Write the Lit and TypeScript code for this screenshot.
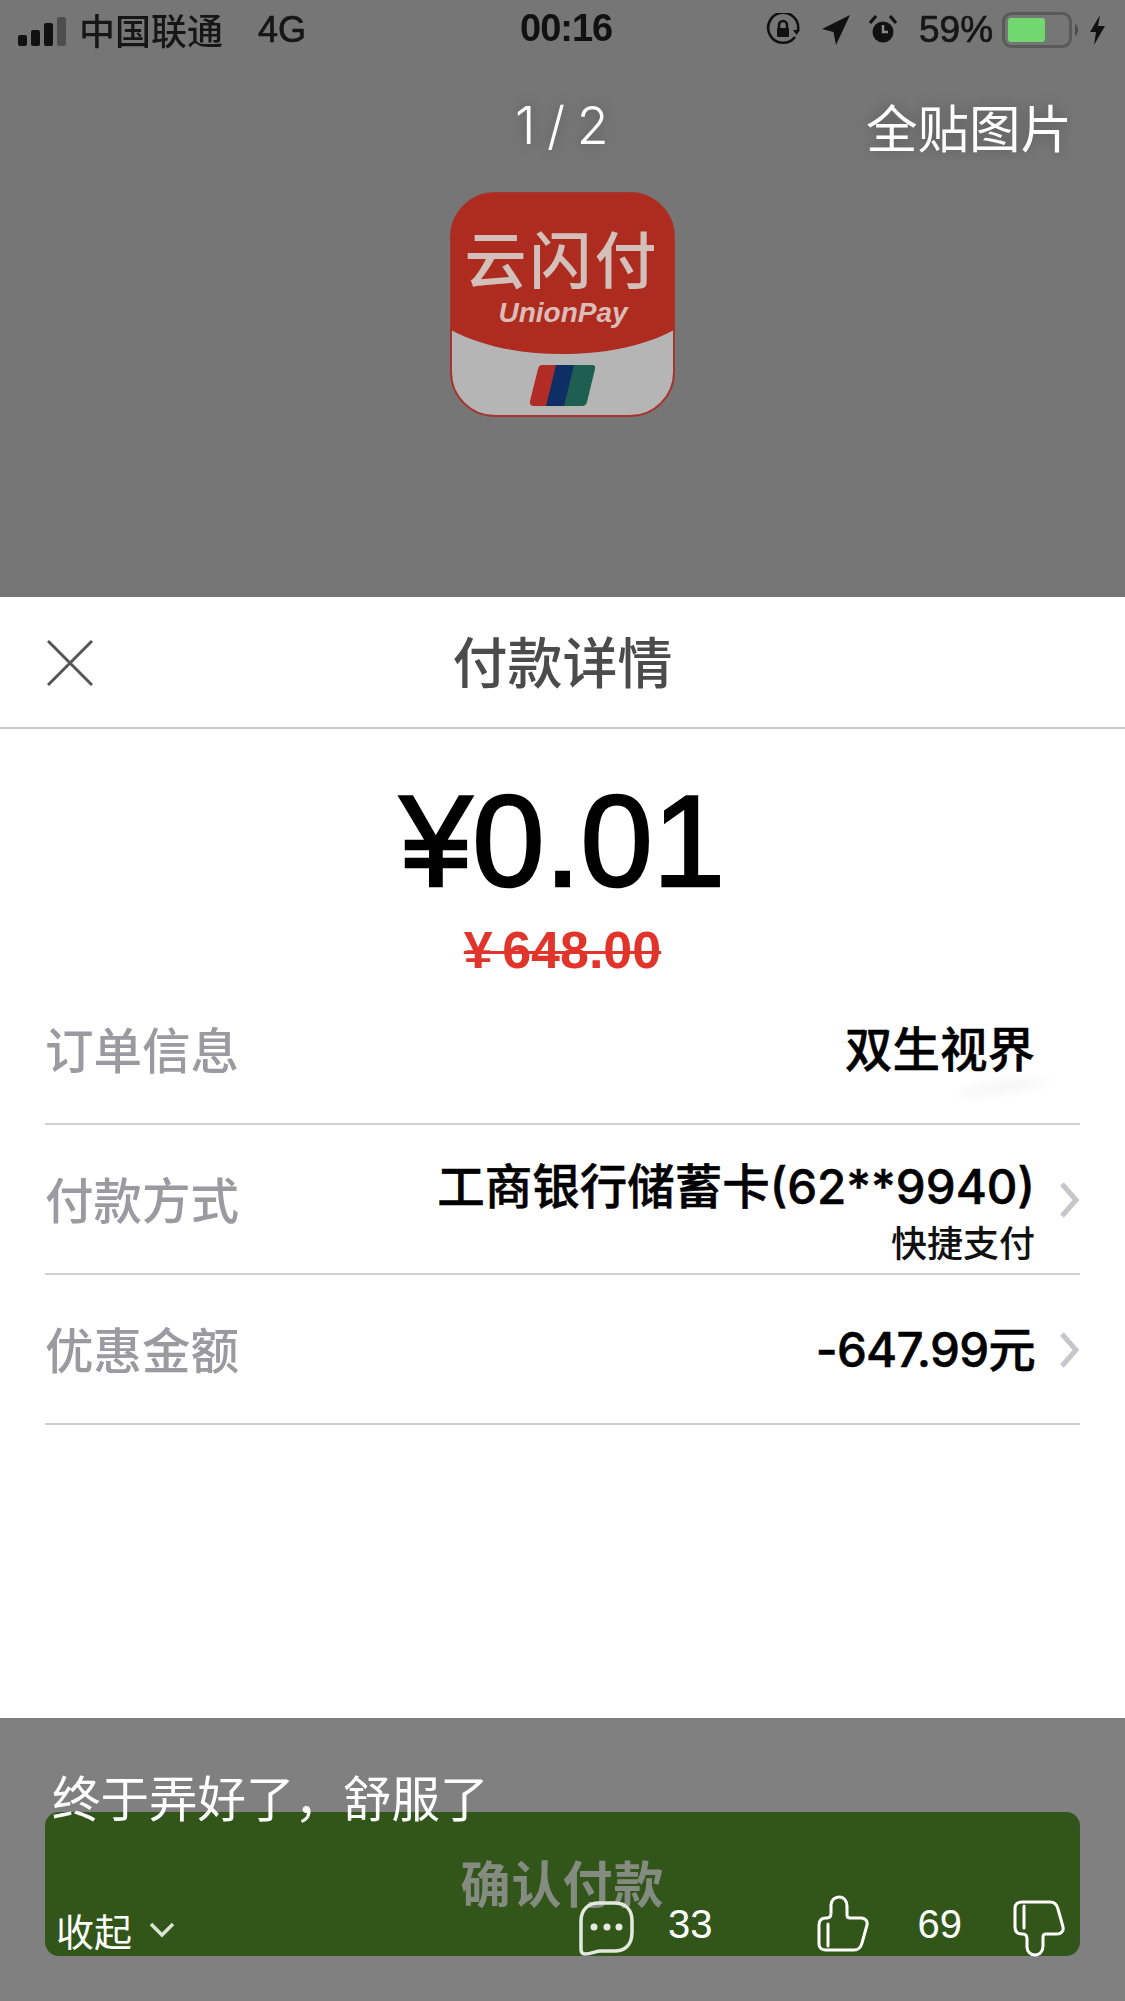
import { LitElement, html, css, svg } from "lit";
import { customElement } from "lit/decorators.js";

const thumb = svg`<path d="M2 30C2 25 5 23 9 23H10C13 23 14 21 14 18V10C14 5 18 2 22 2C27 2 30 6 30 11V20C30 22 31 23 33 23H44C48 23 51 26 50 30L45 48C44 52 41 55 37 55H9C5 55 2 53 2 49Z"/><path d="M11 29V51"/>`;

@customElement("app-root")
export class AppRoot extends LitElement {
  static styles = css`
    :host {
      display: flex;
      flex-direction: column;
      width: 1125px;
      height: 2001px;
      overflow: hidden;
      font-family: "Liberation Sans", "Noto Sans CJK SC", sans-serif;
      background: #fff;
    }
    .top {
      height: 597px;
      background: #767676;
      display: flex;
      flex-direction: column;
      flex: none;
    }
    .status {
      height: 62px;
      display: grid;
      grid-template-columns: 500px 135px 1fr;
      align-items: center;
      color: #111;
      padding-left: 18px;
      filter: blur(0.5px);
    }
    .st-left {
      display: flex;
      align-items: center;
    }
    .signal {
      width: 50px;
      height: 30px;
      margin-right: 11px;
      flex: none;
    }
    .carrier {
      font-size: 36px;
      font-family: "Noto Sans CJK SC", sans-serif;
      font-weight: 500;
      line-height: 44px;
      color: #161616;
      margin-top: -4px;
    }
    .net {
      font-size: 36px;
      margin-left: 35px;
      margin-top: -2px;
      color: #161616;
      -webkit-text-stroke: 0.7px #161616;
    }
    .time {
      font-size: 38px;
      font-weight: 700;
      letter-spacing: -1px;
      margin-left: 2px;
      margin-top: -6px;
      color: #111;
    }
    .st-right {
      display: flex;
      align-items: center;
      margin-left: 113px;
      margin-top: -2px;
    }
    .st-right svg {
      flex: none;
      display: block;
    }
    .pct {
      font-size: 37px;
      color: #161616;
      -webkit-text-stroke: 0.7px #161616;
      margin: 0 9px 0 21px;
    }
    .bolt {
      margin-left: 8px;
    }
    .nav {
      display: flex;
      align-items: center;
      height: 68px;
      margin-top: -2px;
      padding-top: 32px;
      color: #fff;
      text-shadow: 0 0 14px rgba(0, 0, 0, 0.28);
    }
    .pager {
      margin-left: 515px;
      font-family: "Inter", "Liberation Sans", sans-serif;
      font-size: 52px;
      font-weight: 300;
      word-spacing: -3px;
      width: 351px;
      line-height: 68px;
      white-space: nowrap;
    }
    .fulltxt {
      font-family: "Noto Sans CJK SC", sans-serif;
      font-size: 51.5px;
      font-weight: 400;
      line-height: 68px;
      white-space: nowrap;
    }
    .logo {
      display: block;
      margin: 32px 0 0 450px;
      width: 225px;
      height: 225px;
    }
    .logo text {
      font-family: "Noto Sans CJK SC", sans-serif;
    }
    .logo .uni {
      font-family: "Liberation Sans", sans-serif;
      font-style: italic;
      font-weight: 700;
    }

    .sheet {
      height: 1121px;
      flex: none;
      background: #fff;
      display: flex;
      flex-direction: column;
      position: relative;
    }
    .head {
      height: 130px;
      box-sizing: content-box;
      border-bottom: 2px solid #c9c9c9;
      display: flex;
      align-items: center;
      justify-content: center;
      position: relative;
      flex: none;
    }
    .close {
      position: absolute;
      left: 47px;
      top: 43px;
    }
    .title {
      font-family: "Noto Sans CJK SC", sans-serif;
      font-size: 55px;
      color: #4b4b4b;
      font-weight: 500;
      line-height: 70px;
      margin-top: -7px;
    }
    .amounts {
      height: 246px;
      flex: none;
      display: flex;
      flex-direction: column;
      align-items: center;
      padding-top: 37px;
      box-sizing: border-box;
    }
    .amount {
      font-size: 130px;
      line-height: 150px;
      color: #000;
      -webkit-text-stroke: 2.5px #000;
    }
    .old {
      font-size: 52px;
      line-height: 50px;
      margin-top: 9px;
      color: #e1352b;
      font-weight: 700;
      text-decoration: line-through;
      text-decoration-thickness: 3px;
      word-spacing: -5px;
      font-family: "Liberation Sans", sans-serif;
    }
    .rows {
      margin: 0 45px;
      display: flex;
      flex-direction: column;
    }
    .row {
      height: 150px;
      box-sizing: border-box;
      border-bottom: 2px solid #d0d0d2;
      display: flex;
      align-items: center;
      justify-content: space-between;
    }
    .label {
      font-family: "Noto Sans CJK SC", sans-serif;
      font-size: 48.5px;
      color: #9a9aa0;
      font-weight: 500;
      line-height: 60px;
      margin-top: -2px;
    }
    .right {
      display: flex;
      align-items: center;
    }
    .val {
      display: flex;
      flex-direction: column;
      align-items: flex-end;
      color: #000;
      font-weight: 500;
      margin-top: 2px;
    }
    .v1 {
      font-family: "Inter", "Noto Sans CJK SC", sans-serif;
      font-size: 47.5px;
      line-height: 56px;
      white-space: nowrap;
      -webkit-text-stroke: 0.5px #000;
    }
    .tight {
      letter-spacing: -0.8px;
    }
    .v2 {
      font-family: "Noto Sans CJK SC", sans-serif;
      font-size: 36px;
      line-height: 44px;
      margin-top: 4px;
      color: #111;
    }
    .two .val {
      margin-top: 24px;
    }
    .chev {
      width: 45px;
      display: flex;
      justify-content: flex-end;
      margin-top: 2px;
    }
    .chev svg {
      display: block;
    }
    .smudge {
      position: absolute;
      left: 958px;
      top: 484px;
      width: 90px;
      height: 12px;
      border-radius: 50%;
      background: #f6f6f6;
      filter: blur(5px);
      transform: rotate(-8deg);
    }

    .bottom {
      flex: 1;
      background: #808080;
      position: relative;
      padding: 94px 45px 0;
    }
    .btn {
      height: 144px;
      border-radius: 14px;
      background: #32561a;
      display: flex;
      align-items: center;
      justify-content: center;
      color: #848b80;
      font-family: "Noto Sans CJK SC", sans-serif;
      font-weight: 700;
      font-size: 50px;
      letter-spacing: 1px;
      padding-bottom: 6px;
      box-sizing: border-box;
    }
    .caption {
      position: absolute;
      left: 52px;
      top: 48px;
      font-family: "Noto Sans CJK SC", sans-serif;
      font-size: 48.5px;
      line-height: 60px;
      color: #fff;
      font-weight: 400;
      white-space: nowrap;
    }
    .bar {
      position: absolute;
      left: 58px;
      top: 177px;
      width: 1010px;
      height: 62px;
      display: flex;
      align-items: center;
      color: #fff;
    }
    .fold {
      font-family: "Noto Sans CJK SC", sans-serif;
      font-size: 38px;
      font-weight: 400;
      line-height: 50px;
      width: 91px;
      flex: none;
      white-space: nowrap;
      margin-top: 8px;
      margin-left: -2px;
      padding-right: 2px;
    }
    .num {
      font-size: 40px;
      line-height: 46px;
      font-family: "Liberation Sans", sans-serif;
      margin-top: -4px;
      flex: none;
    }
    .bar svg {
      flex: none;
      display: block;
    }
    .ic {
      fill: none;
      stroke: #fff;
      stroke-width: 3;
      stroke-linejoin: round;
      stroke-linecap: round;
    }
    .down-chev {
      margin-top: 8px;
    }
    .comment {
      margin-left: 404px;
      margin-top: 6px;
    }
    .n33 {
      margin-left: 33px;
    }
    .up {
      margin-left: 104px;
      margin-top: -6px;
    }
    .n69 {
      margin-left: 49px;
    }
    .down {
      margin-left: 51px;
      margin-top: 4px;
    }
  `;

  render() {
    const chevron = html`<div class="chev">
      <svg width="21" height="36" viewBox="0 0 21 36" fill="none" stroke="#c6c6cb" stroke-width="5">
        <path d="M3 2L17 18L3 34"></path>
      </svg>
    </div>`;
    return html`
      <section class="top">
        <div class="status">
          <div class="st-left">
            <svg class="signal" viewBox="0 0 50 30">
              <rect x="0" y="19" width="9" height="11" rx="2" fill="#111"></rect>
              <rect x="13" y="14" width="9" height="16" rx="2" fill="#111"></rect>
              <rect x="26" y="7" width="9" height="23" rx="2" fill="#111"></rect>
              <rect x="39" y="1" width="9" height="29" rx="2" fill="#4e4e4e"></rect>
            </svg>
            <span class="carrier">中国联通</span>
            <span class="net">4G</span>
          </div>
          <div class="time">00:16</div>
          <div class="st-right">
            <svg width="34" height="34" viewBox="0 0 34 34" fill="none" stroke="#111" stroke-width="2.6">
              <path d="M29 24A15 15 0 1 1 32 17"></path>
              <path d="M27 17H34L30.5 22Z" fill="#111" stroke="none"></path>
              <rect x="11" y="15" width="12" height="9" rx="1" fill="#111" stroke="none"></rect>
              <path d="M13 15V12A4 4 0 0 1 21 12V15"></path>
            </svg>
            <svg style="margin-left:21px" width="30" height="32" viewBox="0 0 30 32">
              <path d="M29 1L15 31L12.5 18L1 15Z" fill="#111"></path>
            </svg>
            <svg style="margin-left:17px" width="30" height="32" viewBox="0 0 30 32">
              <circle cx="15" cy="18" r="10.5" fill="#111"></circle>
              <path d="M2 9L8 2M28 9L22 2" stroke="#111" stroke-width="3"></path>
              <path d="M15 11V18H20" stroke="#8a8a8a" stroke-width="2.5" fill="none"></path>
            </svg>
            <span class="pct">59%</span>
            <svg width="80" height="36" viewBox="0 0 80 36">
              <rect x="1.5" y="1.5" width="67" height="33" rx="8" fill="none" stroke="#5a5a5a" stroke-width="3"></rect>
              <rect x="6" y="6" width="37" height="24" rx="3" fill="#70d86f"></rect>
              <path d="M73 12C77 13 77 23 73 24Z" fill="#4c4c4c"></path>
            </svg>
            <svg class="bolt" width="15" height="30" viewBox="0 0 15 30">
              <path d="M10 0L0 17H6L4 30L15 11H8Z" fill="#111"></path>
            </svg>
          </div>
        </div>
        <div class="nav">
          <span class="pager">1 / 2</span>
          <span class="fulltxt">全贴图片</span>
        </div>
        <svg class="logo" viewBox="0 0 225 225">
          <rect x="1" y="1" width="223" height="223" rx="44" fill="#b5b5b5" stroke="#a5362f" stroke-width="2"></rect>
          <path d="M1 138V45A44 44 0 0 1 45 1H180A44 44 0 0 1 224 45V138C190 156 150 162 112 162C75 162 35 156 1 138Z" fill="#ae2b20"></path>
          <text x="112" y="92" font-size="62" letter-spacing="3" font-weight="500" text-anchor="middle" fill="#d3c0bb">云闪付</text>
          <text class="uni" x="113" y="130" font-size="28" text-anchor="middle" fill="#dcbcb6">UnionPay</text>
          <path d="M92 173H108L98 214H84Q79 214 80 209L88 177Q89 173 92 173Z" fill="#b12c24"></path>
          <path d="M106 173H126L116 214H96Z" fill="#0e2f66"></path>
          <path d="M124 173H142Q146 173 145 177L137 210Q136 214 132 214H114Z" fill="#1e5f52"></path>
        </svg>
      </section>

      <section class="sheet">
        <header class="head">
          <svg class="close" width="46" height="46" viewBox="0 0 46 46" fill="none" stroke="#555" stroke-width="3">
            <path d="M1 1L45 45M45 1L1 45"></path>
          </svg>
          <span class="title">付款详情</span>
        </header>
        <div class="amounts">
          <div class="amount">¥0.01</div>
          <div class="old">¥ 648.00</div>
        </div>
        <div class="rows">
          <div class="row">
            <span class="label">订单信息</span>
            <div class="right">
              <div class="val"><span class="v1">双生视界</span></div>
              <div class="chev"></div>
            </div>
          </div>
          <div class="row two">
            <span class="label">付款方式</span>
            <div class="right">
              <div class="val">
                <span class="v1">工商银行储蓄卡(62**9940)</span>
                <span class="v2">快捷支付</span>
              </div>
              ${chevron}
            </div>
          </div>
          <div class="row">
            <span class="label">优惠金额</span>
            <div class="right">
              <div class="val"><span class="v1 tight">-647.99元</span></div>
              ${chevron}
            </div>
          </div>
        </div>
        <div class="smudge"></div>
      </section>

      <section class="bottom">
        <div class="btn">确认付款</div>
        <div class="caption">终于弄好了，舒服了</div>
        <div class="bar">
          <span class="fold">收起</span>
          <svg class="down-chev" width="26" height="16" viewBox="0 0 26 16" fill="none" stroke="#d9e4d2" stroke-width="3.5">
            <path d="M2 2L13 13L24 2"></path>
          </svg>
          <svg class="comment" width="56" height="56" viewBox="0 0 56 56">
            <path class="ic" style="stroke:#e3e9de;stroke-width:3.5" d="M20 2H35C47 2 53 9 53 20V31C53 43 47 50 35 50H22C17 50 12 53 6 53C3 53 2 51 2 48V20C2 9 9 2 20 2Z"></path>
            <circle cx="15" cy="26" r="3.5" fill="#e3e9de"></circle>
            <circle cx="28" cy="26" r="3.5" fill="#e3e9de"></circle>
            <circle cx="40" cy="26" r="3.5" fill="#e3e9de"></circle>
          </svg>
          <span class="num n33">33</span>
          <svg class="up ic" width="52" height="57" viewBox="0 0 52 57">${thumb}</svg>
          <span class="num n69">69</span>
          <svg class="down ic" width="52" height="58" viewBox="0 0 52 58">
            <g transform="translate(0 58) scale(1 -1)">${thumb}</g>
          </svg>
        </div>
      </section>
    `;
  }
}
